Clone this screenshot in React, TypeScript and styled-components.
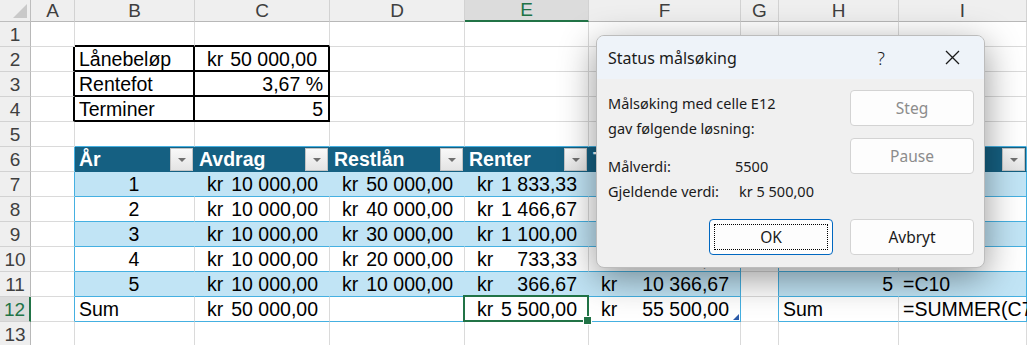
import React from "react";
import styled, { createGlobalStyle, css } from "styled-components";

const GlobalStyle = createGlobalStyle`
  html, body { margin: 0; padding: 0; background: #fff; }
  * { box-sizing: border-box; }
`;

const COLS = [31, 44, 120, 135, 135, 124, 152, 38, 120, 128];
const LETTERS = ["A", "B", "C", "D", "E", "F", "G", "H", "I"];

const BLUE = "#156082";
const BAND = "#c1e4f5";
const LINE = "#45b0e1";
const GRID = "#dadada";
const SEL = "#217346";

type Align = "l" | "r" | "c";

interface Spec {
  t?: string;
  n?: string;
  a?: Align;
  head?: boolean;
  fill?: string;
  right?: string;
  bottom?: string;
  sel?: boolean;
  handle?: boolean;
}

const Root = styled.div`
  position: relative;
  width: 1027px;
  height: 345px;
  overflow: hidden;
  background: #fff;
  font-family: "Liberation Sans", Arial, sans-serif;
`;

const Sheet = styled.div`
  display: grid;
  grid-template-columns: ${COLS.map((c) => c + "px").join(" ")};
  grid-template-rows: 22px;
  grid-auto-rows: 25px;
  font-size: 19.5px;
  color: #000;
`;

const Corner = styled.div`
  position: relative;
  background: #efefef;
  border-right: 1px solid #bdbdbd;
  border-bottom: 1px solid #bdbdbd;
  &::after {
    content: "";
    position: absolute;
    right: 3px;
    bottom: 3px;
    border-left: 14px solid transparent;
    border-bottom: 14px solid #c9c9c9;
  }
`;

const ColHead = styled.div<{ $active?: boolean }>`
  display: flex;
  align-items: center;
  justify-content: center;
  background: ${(p) => (p.$active ? "#dcdcdc" : "#efefef")};
  color: ${(p) => (p.$active ? SEL : "#3f3f3f")};
  border-right: 1px solid #d2d2d2;
  border-bottom: ${(p) => (p.$active ? `2px solid ${SEL}` : "1px solid #b8b8b8")};
  font-size: 19px;
`;

const RowHead = styled.div<{ $active?: boolean }>`
  display: flex;
  align-items: center;
  justify-content: center;
  padding-top: 1px;
  background: ${(p) => (p.$active ? "#dcdcdc" : "#efefef")};
  color: ${(p) => (p.$active ? SEL : "#3f3f3f")};
  border-right: ${(p) => (p.$active ? `2px solid ${SEL}` : "1px solid #b8b8b8")};
  border-bottom: 1px solid #d2d2d2;
  font-size: 19px;
`;

const Cell = styled.div<{
  $fill?: string;
  $kind: Align | "acc" | "head";
  $right?: string;
  $bottom?: string;
  $sel?: boolean;
  $handle?: boolean;
}>`
  position: relative;
  display: flex;
  align-items: center;
  white-space: nowrap;
  background: ${(p) => p.$fill ?? "#fff"};
  border-right: ${(p) => p.$right ?? `1px solid ${p.$fill ?? GRID}`};
  border-bottom: ${(p) => p.$bottom ?? `1px solid ${GRID}`};
  justify-content: ${(p) =>
    p.$kind === "r"
      ? "flex-end"
      : p.$kind === "c"
      ? "center"
      : p.$kind === "l"
      ? "flex-start"
      : "space-between"};
  padding: ${(p) =>
    p.$kind === "acc"
      ? "1px 11px 0 12px"
      : p.$kind === "head"
      ? "0 1px 0 4px"
      : "1px 5px 0 4px"};
  ${(p) =>
    p.$sel &&
    css`
      z-index: 2;
      &::after {
        content: "";
        position: absolute;
        left: -2px;
        top: -2px;
        right: -1px;
        bottom: -1px;
        border: 2px solid ${SEL};
      }
      &::before {
        content: "";
        position: absolute;
        right: -4px;
        bottom: -4px;
        width: 7px;
        height: 7px;
        background: ${SEL};
        border: 1px solid #fff;
        z-index: 3;
      }
    `}
  ${(p) =>
    p.$handle &&
    css`
      &::after {
        content: "";
        position: absolute;
        right: 1px;
        bottom: 1px;
        border-left: 6px solid transparent;
        border-bottom: 6px solid #2b5aa8;
      }
    `}
`;

const HeadLabel = styled.span`
  color: #fff;
  font-weight: 700;
  padding-top: 1px;
`;

const FilterBtn = styled.span`
  display: flex;
  align-items: center;
  justify-content: center;
  width: 23px;
  height: 23px;
  background: linear-gradient(#f9f9f9, #e4e4e4);
  border: 1px solid #c4c4c4;
  &::before {
    content: "";
    border-left: 4px solid transparent;
    border-right: 4px solid transparent;
    border-top: 4px solid #707070;
    margin-top: 1px;
  }
`;

/* ---------- dialog ---------- */

const Dialog = styled.div`
  position: absolute;
  left: 596px;
  top: 35px;
  width: 389px;
  z-index: 10;
  background: #f0f0f0;
  border: 1px solid #bcbcbc;
  border-radius: 8px;
  box-shadow: 0 10px 36px rgba(0, 0, 0, 0.42);
  overflow: hidden;
  font-family: "Noto Sans", "Open Sans", sans-serif;
  color: #1a1a1a;
`;

const TitleBar = styled.div`
  display: flex;
  align-items: center;
  height: 43px;
  padding-left: 11px;
  background: #eef3f9;
  font-size: 16px;
`;

const Title = styled.div`
  flex: 1;
`;

const IconBtn = styled.div<{ $gap?: number }>`
  display: flex;
  align-items: center;
  justify-content: center;
  width: 46px;
  height: 43px;
  margin-right: ${(p) => p.$gap ?? 0}px;
  font-size: 18px;
  font-weight: 300;
`;

const Body = styled.div`
  padding: 11px 10px 12px 11px;
`;

const Top = styled.div`
  display: flex;
  justify-content: space-between;
`;

const Info = styled.div`
  display: flex;
  flex-direction: column;
  font-size: 14.5px;
`;

const Line = styled.div<{ $gapTop?: number }>`
  display: flex;
  align-items: center;
  height: 25px;
  margin-top: ${(p) => p.$gapTop ?? 0}px;
`;

const Label = styled.span<{ $w: number }>`
  width: ${(p) => p.$w}px;
`;

const Side = styled.div`
  display: flex;
  flex-direction: column;
  gap: 12px;
`;

const Actions = styled.div`
  display: flex;
  justify-content: flex-end;
  gap: 17px;
  margin-top: 16px;
`;

const Button = styled.div<{ $disabled?: boolean; $primary?: boolean }>`
  position: relative;
  display: flex;
  align-items: center;
  justify-content: center;
  width: 124px;
  height: 36px;
  background: #fdfdfd;
  border: 1px solid ${(p) => (p.$primary ? "#0067c0" : "#d3d3d3")};
  border-radius: 4px;
  font-size: 15.5px;
  color: ${(p) => (p.$disabled ? "#8c8c8c" : "#1a1a1a")};
  ${(p) =>
    p.$primary &&
    css`
      &::after {
        content: "";
        position: absolute;
        inset: 4px;
        border: 1px dotted #000;
      }
    `}
`;

const CloseIcon = () => (
  <svg width="15" height="15" viewBox="0 0 15 15">
    <path d="M1 1 L14 14 M14 1 L1 14" stroke="#1a1a1a" strokeWidth="1.3" fill="none" />
  </svg>
);

/* ---------- data ---------- */

const blk = "2px solid #000";
const ln = `1px solid ${LINE}`;

const head = (t: string, last = false): Spec => ({
  t,
  head: true,
  fill: BLUE,
  bottom: `1px solid ${BLUE}`,
  right: last ? ln : `1px solid ${BLUE}`,
});

const empty = (n: number): Spec[] => Array.from({ length: n }, () => ({}));

const bandRow = (
  i: number,
  year: string,
  avdrag: string,
  rest: string,
  renter: string,
  termin: string,
  iVal: string
): Spec[] => {
  const fill = i % 2 === 1 ? BAND : undefined;
  return [
    { right: ln },
    { t: year, a: "c", fill, bottom: ln },
    { n: avdrag, fill, bottom: ln },
    { n: rest, fill, bottom: ln },
    { n: renter, fill, bottom: ln },
    { n: termin, fill, bottom: ln, right: ln },
    { right: ln },
    { t: year, a: "r", fill, bottom: ln },
    { t: iVal, a: "l", fill, bottom: ln, right: ln },
  ];
};

const ROWS: Spec[][] = [
  [{}, { bottom: blk }, { bottom: blk }, ...empty(6)],
  [
    { right: blk },
    { t: "Lånebeløp", right: blk, bottom: blk },
    { n: "50 000,00", right: blk, bottom: blk },
    ...empty(6),
  ],
  [
    { right: blk },
    { t: "Rentefot", right: blk, bottom: blk },
    { t: "3,67 %", a: "r", right: blk, bottom: blk },
    ...empty(6),
  ],
  [
    { right: blk },
    { t: "Terminer", right: blk, bottom: blk },
    { t: "5", a: "r", right: blk, bottom: blk },
    ...empty(6),
  ],
  [
    {},
    { bottom: ln },
    { bottom: ln },
    { bottom: ln },
    { bottom: ln },
    { bottom: ln },
    {},
    { bottom: ln },
    { bottom: ln },
  ],
  [
    { right: ln },
    head("År"),
    head("Avdrag"),
    head("Restlån"),
    head("Renter"),
    head("Terminbeløp", true),
    { right: ln },
    head("År"),
    head("Restlån", true),
  ],
  bandRow(7, "1", "10 000,00", "50 000,00", "1 833,33", "11 833,33", "=C2"),
  bandRow(8, "2", "10 000,00", "40 000,00", "1 466,67", "11 466,67", "=C7"),
  bandRow(9, "3", "10 000,00", "30 000,00", "1 100,00", "11 100,00", "=C8"),
  bandRow(10, "4", "10 000,00", "20 000,00", "733,33", "10 733,33", "=C9"),
  bandRow(11, "5", "10 000,00", "10 000,00", "366,67", "10 366,67", "=C10"),
  [
    { right: ln },
    { t: "Sum", bottom: ln },
    { n: "50 000,00", bottom: ln },
    { bottom: ln },
    { n: "5 500,00", bottom: ln, sel: true },
    { n: "55 500,00", bottom: ln, right: ln, handle: true },
    { right: ln },
    { t: "Sum", bottom: ln },
    { t: "=SUMMER(C7:C11)", bottom: ln, right: ln },
  ],
  empty(9),
];

const renderCell = (s: Spec, key: string) => {
  const kind = s.head ? "head" : s.n ? "acc" : s.a ?? "l";
  return (
    <Cell
      key={key}
      $kind={kind}
      $fill={s.fill}
      $right={s.right}
      $bottom={s.bottom}
      $sel={s.sel}
      $handle={s.handle}
    >
      {s.head ? (
        <>
          <HeadLabel>{s.t}</HeadLabel>
          <FilterBtn />
        </>
      ) : s.n ? (
        <>
          <span>kr</span>
          <span>{s.n}</span>
        </>
      ) : (
        s.t
      )}
    </Cell>
  );
};

export default function App() {
  return (
    <Root>
      <GlobalStyle />
      <Sheet>
        <Corner />
        {LETTERS.map((l) => (
          <ColHead key={l} $active={l === "E"}>
            {l}
          </ColHead>
        ))}
        {ROWS.map((row, r) => (
          <React.Fragment key={r}>
            <RowHead $active={r + 1 === 12}>{r + 1}</RowHead>
            {row.map((s, c) => renderCell(s, `${r}-${c}`))}
          </React.Fragment>
        ))}
      </Sheet>

      <Dialog>
        <TitleBar>
          <Title>Status målsøking</Title>
          <IconBtn $gap={25}>?</IconBtn>
          <IconBtn $gap={9}>
            <CloseIcon />
          </IconBtn>
        </TitleBar>
        <Body>
          <Top>
            <Info>
              <Line>Målsøking med celle E12</Line>
              <Line>gav følgende løsning:</Line>
              <Line $gapTop={13}>
                <Label $w={127}>Målverdi:</Label>
                <span>5500</span>
              </Line>
              <Line>
                <Label $w={131}>Gjeldende verdi:</Label>
                <span>kr 5 500,00</span>
              </Line>
            </Info>
            <Side>
              <Button $disabled>Steg</Button>
              <Button $disabled>Pause</Button>
            </Side>
          </Top>
          <Actions>
            <Button $primary>OK</Button>
            <Button>Avbryt</Button>
          </Actions>
        </Body>
      </Dialog>
    </Root>
  );
}
